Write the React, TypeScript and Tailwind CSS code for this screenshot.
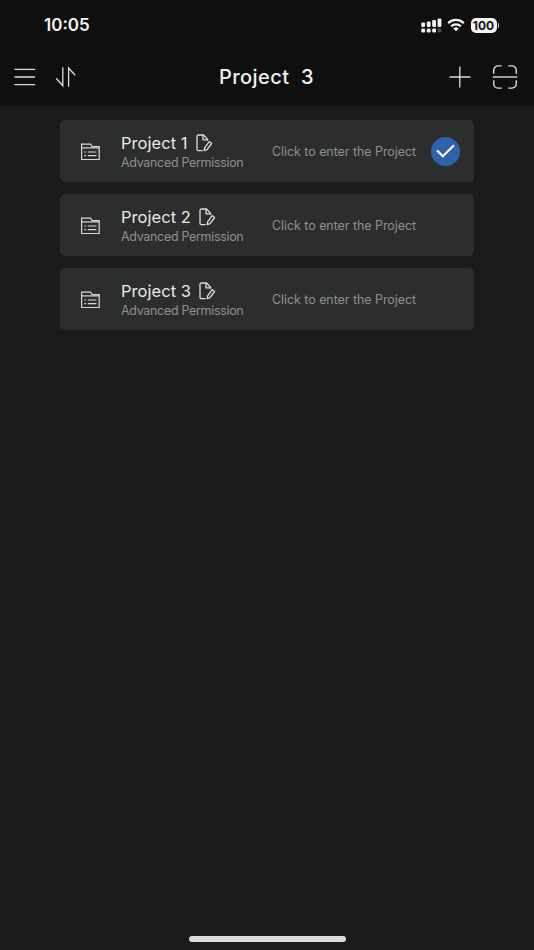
interface Project {
  name: string;
  permission: string;
  selected: boolean;
}

const projects: Project[] = [
  { name: "Project 1", permission: "Advanced Permission", selected: true },
  { name: "Project 2", permission: "Advanced Permission", selected: false },
  { name: "Project 3", permission: "Advanced Permission", selected: false },
];

function SignalIcon() {
  return (
    <svg width="21" height="15" viewBox="0 0 21 15" fill="#f4f4f4">
      <rect x="0.3" y="4.6" width="3.8" height="4.4" rx="1.2" />
      <rect x="5.8" y="3.4" width="3.8" height="5.6" rx="1.2" />
      <rect x="11.2" y="2" width="3.8" height="7" rx="1.2" />
      <rect x="16.6" y="0.4" width="3.8" height="8.6" rx="1.2" />
      <rect x="0.3" y="10.6" width="3.8" height="3.8" rx="1.2" />
      <rect x="5.8" y="10.6" width="3.8" height="3.8" rx="1.2" />
      <rect x="11.2" y="10.6" width="3.8" height="3.8" rx="1.2" />
      <rect x="16.6" y="10.6" width="3.8" height="3.8" rx="1.2" fill="#4a4a4a" />
    </svg>
  );
}

function WifiIcon() {
  return (
    <svg width="18" height="14" viewBox="0 0 18 14" fill="none" stroke="#f4f4f4" strokeWidth="2.2">
      <path d="M1.2 5.1a11.2 11.2 0 0 1 15.6 0" />
      <path d="M4.1 8.3a7 7 0 0 1 9.8 0" />
      <path d="M9 13.2 6.2 10.5a4.1 4.1 0 0 1 5.6 0z" fill="#f4f4f4" stroke="none" />
    </svg>
  );
}

function MenuIcon() {
  return (
    <svg width="22" height="20" viewBox="0 0 22 20" stroke="#dcdcdc" strokeWidth="1.3">
      <path d="M0.5 2.3h20.6M0.5 10h20.6M0.5 17.7h20.6" />
    </svg>
  );
}

function SortIcon() {
  return (
    <svg width="22" height="22" viewBox="0 0 22 22" fill="none" stroke="#dcdcdc" strokeWidth="1.3">
      <path d="M1.2 12.3 7.8 19.7V1.2" />
      <path d="M13.6 20.8V2l6.6 7.2" />
    </svg>
  );
}

function PlusIcon() {
  return (
    <svg width="22" height="22" viewBox="0 0 22 22" stroke="#dcdcdc" strokeWidth="1.3">
      <path d="M10.8 0.5v21M0.5 11h21" />
    </svg>
  );
}

function ScanIcon() {
  return (
    <svg width="26" height="24" viewBox="0 0 26 24" fill="none" stroke="#dcdcdc" strokeWidth="1.4">
      <path d="M1.7 8.8V5.2a4.3 4.3 0 0 1 4.3-4.3h3.7M16.3 0.9H20a4.3 4.3 0 0 1 4.3 4.3v3.6" />
      <path d="M1.7 15.2v3.6a4.3 4.3 0 0 0 4.3 4.3h3.7M16.3 23.1H20a4.3 4.3 0 0 0 4.3-4.3v-3.6" />
      <path d="M0.8 12h24.6" />
    </svg>
  );
}

function FolderIcon() {
  return (
    <svg width="20" height="18" viewBox="0 0 20 18" fill="none" stroke="#d8d8d8" strokeWidth="1.2">
      <path d="M1.6 16.5V1.2h9l1.6 2.4h7v12.9z" />
      <path d="M1.6 4.9h17.6" />
      <path d="M4.3 9h1.8M7.8 9h8.6M4.3 12.6h1.8M7.8 12.6h8.6" strokeWidth="1.2" />
    </svg>
  );
}

function EditIcon() {
  return (
    <svg width="17" height="18" viewBox="0 0 17 18" fill="none" stroke="#dedede" strokeWidth="1.3" strokeLinejoin="round">
      <path d="M11.6 6.8V5.4L7.6 1H2.4Q1 1 1 2.4v12.8q0 1.4 1.4 1.4h4.2" />
      <path d="M7 1.2v4.6h4.4" />
      <path d="M8.6 13.8 13.2 7.6l2.4 1.9-4.6 6.1-2.8 1z" />
    </svg>
  );
}

function StatusBar() {
  return (
    <div className="flex h-[50px] items-center justify-between pl-[44px] pr-[35px]">
      <span className="pt-px font-['Inter',sans-serif] text-[17px] font-semibold leading-none text-[#f4f4f4]">
        10:05
      </span>
      <div className="flex items-center">
        <SignalIcon />
        <div className="ml-[5px]">
          <WifiIcon />
        </div>
        <div className="ml-[6px] flex h-[15px] w-[26px] items-center justify-center rounded-[5px] bg-[#f4f4f4] font-['Inter',sans-serif] text-[12px] font-bold leading-[15px] text-[#111111]">
          100
        </div>
        <div className="ml-px h-[5px] w-[1.5px] rounded-r-full bg-[#c8c8c8]" />
      </div>
    </div>
  );
}

function NavBar() {
  return (
    <div className="grid h-[54px] grid-cols-3 items-center pl-[14px] pr-[16px]">
      <div className="flex items-center gap-[19px]">
        <MenuIcon />
        <SortIcon />
      </div>
      <h1 className="whitespace-pre pl-px text-center text-[20px] font-medium leading-none tracking-[0.45px] text-[#f0f0f0]">
        Project  3
      </h1>
      <div className="flex items-center justify-end gap-[21px]">
        <PlusIcon />
        <ScanIcon />
      </div>
    </div>
  );
}

function ProjectCard({ name, permission, selected }: Project) {
  return (
    <div className="flex h-[62px] items-center rounded-[5px] bg-[#2c2e2d] pl-[20px] pr-[14px]">
      <div className="mt-[2px]">
        <FolderIcon />
      </div>
      <div className="ml-[21px] mt-[3px] w-[151px]">
        <div className="flex h-[20px] items-center gap-[8px]">
          <span className="whitespace-nowrap text-[16.5px] leading-[20px] tracking-[0.05px] text-[#e8e8e8]">{name}</span>
          <EditIcon />
        </div>
        <p className="whitespace-nowrap text-[12.5px] leading-[20px] tracking-[-0.32px] text-[#8e8f8e]">{permission}</p>
      </div>
      <span className="mt-[2px] whitespace-nowrap text-[12.5px] leading-[20px] tracking-[-0.06px] text-[#8e8f8e]">
        Click to enter the Project
      </span>
      {selected && (
        <div className="ml-auto flex h-[29px] w-[29px] items-center justify-center rounded-full bg-[#2f62ab]">
          <svg width="19" height="14" viewBox="0 0 19 14" fill="none" stroke="#f5f8fc" strokeWidth="2.2">
            <path d="m1 6.4 5.8 5.8L18 1.2" />
          </svg>
        </div>
      )}
    </div>
  );
}

export default function App() {
  return (
    <div className="flex h-[950px] w-[534px] flex-col overflow-hidden bg-[#1b1b1b] font-['Inter','Liberation_Sans',sans-serif]">
      <header className="h-[106px] bg-[#0f0f0f]">
        <StatusBar />
        <NavBar />
      </header>
      <main className="flex flex-1 flex-col gap-[12px] px-[60px] pt-[14px]">
        {projects.map((project) => (
          <ProjectCard key={project.name} {...project} />
        ))}
      </main>
      <div className="mb-[8px] h-[6px] w-[157px] self-center rounded-full bg-[#dcdcdc]" />
    </div>
  );
}
